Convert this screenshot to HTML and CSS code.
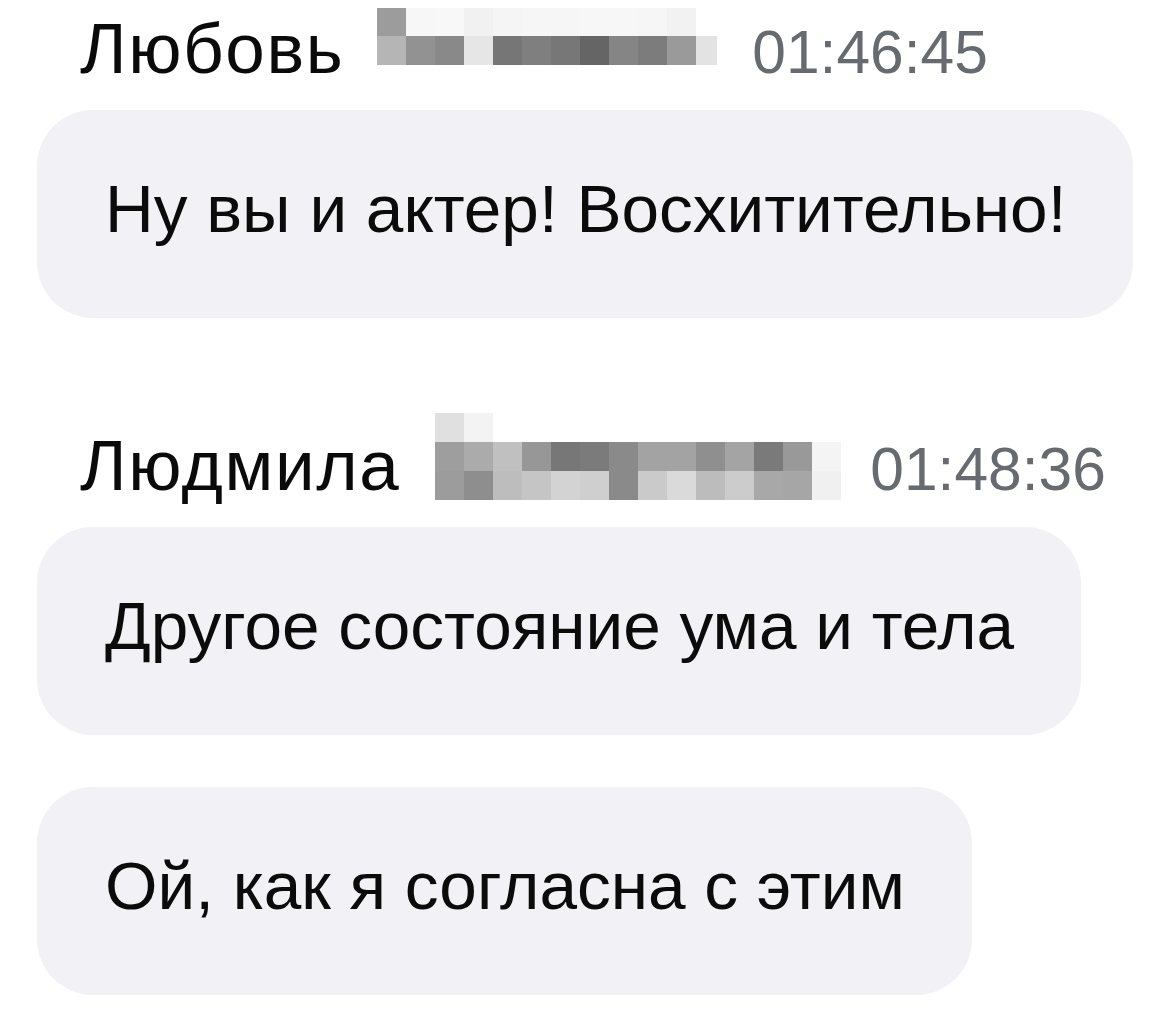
FILE: index.html
```html
<!DOCTYPE html>
<html lang="ru">
<head>
<meta charset="utf-8">
<title>Чат</title>
<link rel="stylesheet" href="styles.css">
</head>
<body>
<div class="chat">
  <section class="group">
    <div class="header">
      <span class="name">Любовь</span>
      <div class="pix pix-a">
        <i style="background:#9c9c9c"></i><i style="background:#f7f7f7"></i><i style="background:#f8f8f8"></i><i style="background:#f1f1f1"></i><i style="background:#f5f5f5"></i><i style="background:#f6f6f6"></i><i style="background:#f6f6f6"></i><i style="background:#f7f7f7"></i><i style="background:#f7f7f7"></i><i style="background:#f6f6f6"></i><i style="background:#f2f2f2"></i><i style="background:#ffffff"></i>
        <i style="background:#b5b5b5"></i><i style="background:#929292"></i><i style="background:#898989"></i><i style="background:#e6e6e6"></i><i style="background:#767676"></i><i style="background:#7f7f7f"></i><i style="background:#777777"></i><i style="background:#656565"></i><i style="background:#858585"></i><i style="background:#7c7c7c"></i><i style="background:#9a9a9a"></i><i style="background:#e3e3e3"></i>
      </div>
      <span class="time">01:46:45</span>
    </div>
    <div class="bubble">Ну вы и актер! Восхитительно!</div>
  </section>

  <section class="group group-next">
    <div class="header">
      <span class="name">Людмила</span>
      <div class="pix pix-b">
        <i style="background:#e0e0e0"></i><i style="background:#f3f3f3"></i><i style="background:#ffffff"></i><i style="background:#ffffff"></i><i style="background:#ffffff"></i><i style="background:#ffffff"></i><i style="background:#ffffff"></i><i style="background:#ffffff"></i><i style="background:#ffffff"></i><i style="background:#ffffff"></i><i style="background:#ffffff"></i><i style="background:#ffffff"></i><i style="background:#ffffff"></i><i style="background:#ffffff"></i>
        <i style="background:#9e9e9e"></i><i style="background:#ababab"></i><i style="background:#c0c0c0"></i><i style="background:#979797"></i><i style="background:#777777"></i><i style="background:#7b7b7b"></i><i style="background:#8a8a8a"></i><i style="background:#a3a3a3"></i><i style="background:#a3a3a3"></i><i style="background:#8f8f8f"></i><i style="background:#a4a4a4"></i><i style="background:#7a7a7a"></i><i style="background:#999999"></i><i style="background:#f4f4f4"></i>
        <i style="background:#9c9c9c"></i><i style="background:#8e8e8e"></i><i style="background:#bdbdbd"></i><i style="background:#c5c5c5"></i><i style="background:#d3d3d3"></i><i style="background:#cfcfcf"></i><i style="background:#8a8a8a"></i><i style="background:#cacaca"></i><i style="background:#dadada"></i><i style="background:#bcbcbc"></i><i style="background:#cccccc"></i><i style="background:#a8a8a8"></i><i style="background:#a6a6a6"></i><i style="background:#f0f0f0"></i>
      </div>
      <span class="time">01:48:36</span>
    </div>
    <div class="bubble">Другое состояние ума и тела</div>
    <div class="bubble">Ой, как я согласна с этим</div>
  </section>
</div>
</body>
</html>
```

FILE: styles.css
```css
html, body {
  margin: 0;
  padding: 0;
  background: #ffffff;
}

body {
  font-family: "Liberation Sans", Arial, "Noto Sans", sans-serif;
  color: #0b0b0c;
  overflow: hidden;
}

.chat {
  padding: 9px 0 0 37px;
}

.group {
  display: flex;
  flex-direction: column;
  align-items: flex-start;
}

.group-next {
  margin-top: 108px;
}

.header {
  display: flex;
  align-items: baseline;
  padding-left: 43px;
  height: 80px;
  margin-bottom: 21px;
}

.name {
  font-size: 71px;
  line-height: 80px;
  letter-spacing: 1.6px;
  color: #0a0a0a;
}

.time {
  font-size: 60.5px;
  line-height: 80px;
  color: #676b70;
}

.pix {
  display: grid;
  align-self: flex-start;
}

.pix i {
  display: block;
}

.pix-a {
  grid-template-columns: repeat(11, 29px) 21px;
  grid-template-rows: 28px 29px;
  margin: -1px 35px 0 33px;
}

.pix-b {
  grid-template-columns: repeat(14, 29px);
  grid-template-rows: 29px 29px 29px;
  margin: -13px 29px 0 35px;
}

.bubble {
  background: #f1f1f6;
  border-radius: 56px;
  font-size: 67.5px;
  line-height: 80px;
  padding: 59px 67px 69px 68px;
  white-space: nowrap;
}

.bubble + .bubble {
  margin-top: 52px;
}
```
